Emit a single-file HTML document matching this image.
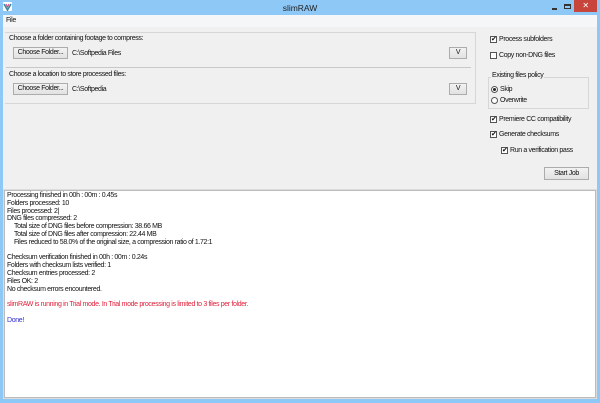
<!DOCTYPE html>
<html><head><meta charset="utf-8"><style>
*{margin:0;padding:0;box-sizing:border-box}
body{width:600px;height:403px;overflow:hidden;background:#8ec8f6;font-family:"Liberation Sans",sans-serif;font-size:7px;color:#111;position:relative;letter-spacing:-0.35px}
.a{position:absolute;white-space:nowrap}
#win{position:absolute;left:3px;top:15px;width:594px;height:384px;background:#f0f0f0}
.btn{position:absolute;border:1px solid #acacac;background:linear-gradient(#f2f2f2,#e2e2e2);text-align:center;font-size:7px;line-height:10px}
.cb{position:absolute;width:7px;height:7px;border:1px solid #555;background:#fff;font-size:7px;line-height:5px;text-align:center;letter-spacing:0}
.rb{position:absolute;width:7px;height:7px;border:1px solid #555;border-radius:50%;background:#fff}
.grp{position:absolute;border:1px solid #d6d6d6}
#log{position:absolute;left:4px;top:190px;width:592px;height:208px;background:#fff;border:1px solid #bbb;outline:1px solid #ddd;padding-top:1px}
#log div{height:7.8px;line-height:7.8px;white-space:nowrap;padding-left:2px}
</style></head><body>
<div class="a" style="left:3px;top:2px;width:9px;height:9px;background:#fff;border-radius:1px"><svg width="9" height="9"><path d="M1 2L4.5 8L8 2" stroke="#3a8a9a" stroke-width="1.6" fill="none"/><path d="M3 2L4.5 5L6 2" stroke="#d04080" stroke-width="1" fill="none"/></svg></div>
<div class="a" style="left:0;width:600px;top:3px;text-align:center;font-size:8.5px;color:#222;letter-spacing:0">slimRAW</div>
<div class="a" style="left:552px;top:8px;width:5px;height:2px;background:#333"></div>
<div class="a" style="left:564px;top:4px;width:7px;height:5px;border:1px solid #333;border-top-width:2px"></div>
<div class="a" style="left:574px;top:0;width:23px;height:12px;background:#c7453a;color:#fff;font-size:8px;text-align:center;line-height:12px">✕</div>
<div id="win"></div>
<div class="a" style="left:3px;top:15px;width:594px;height:12px;background:#f5f6f7"></div>
<div class="a" style="left:6px;top:17px">File</div>
<div class="grp" style="left:5px;top:32px;width:471px;height:72px;border-left:none;border-bottom:none"></div>
<div class="a" style="left:9px;top:35px">Choose a folder containing footage to compress:</div>
<div class="btn" style="left:13px;top:47px;width:55px;height:12px">Choose Folder...</div>
<div class="a" style="left:72px;top:50px">C:\Softpedia Files</div>
<div class="btn" style="left:449px;top:47px;width:18px;height:12px">V</div>
<div class="a" style="left:6px;top:67px;width:465px;height:1px;background:#c8c8c8"></div>
<div class="a" style="left:9px;top:71px">Choose a location to store processed files:</div>
<div class="grp" style="left:5px;top:68px;width:471px;height:36px;border-left:none;border-top:none"></div>
<div class="btn" style="left:13px;top:83px;width:55px;height:12px">Choose Folder...</div>
<div class="a" style="left:72px;top:86px">C:\Softpedia</div>
<div class="btn" style="left:449px;top:83px;width:18px;height:12px">V</div>
<div class="cb" style="left:490px;top:36px">✔</div><div class="a" style="left:499px;top:36px">Process subfolders</div>
<div class="cb" style="left:490px;top:52px"></div><div class="a" style="left:499px;top:52px">Copy non-DNG files</div>
<div class="grp" style="left:488px;top:77px;width:101px;height:32px"></div>
<div class="a" style="left:491px;top:72px;background:#f0f0f0;padding:0 1px">Existing files policy</div>
<div class="rb" style="left:491px;top:86px"><div style="position:absolute;left:1px;top:1px;width:3px;height:3px;border-radius:50%;background:#222"></div></div><div class="a" style="left:500px;top:86px">Skip</div>
<div class="rb" style="left:491px;top:97px"></div><div class="a" style="left:500px;top:97px">Overwrite</div>
<div class="cb" style="left:490px;top:116px">✔</div><div class="a" style="left:499px;top:116px">Premiere CC compatibility</div>
<div class="cb" style="left:490px;top:131px">✔</div><div class="a" style="left:499px;top:131px">Generate checksums</div>
<div class="cb" style="left:501px;top:147px">✔</div><div class="a" style="left:510px;top:147px">Run a verification pass</div>
<div class="btn" style="left:544px;top:167px;width:45px;height:13px;line-height:11px">Start Job</div>
<div id="log">
<div>Processing finished in 00h : 00m : 0.45s</div>
<div>Folders processed: 10</div>
<div>Files processed: 2|</div>
<div>DNG files compressed: 2</div>
<div style="padding-left:9px">Total size of DNG files before compression: 38.66 MB</div>
<div style="padding-left:9px">Total size of DNG files after compression: 22.44 MB</div>
<div style="padding-left:9px">Files reduced to 58.0% of the original size, a compression ratio of 1.72:1</div>
<div></div>
<div>Checksum verification finished in 00h : 00m : 0.24s</div>
<div>Folders with checksum lists verified: 1</div>
<div>Checksum entries processed: 2</div>
<div>Files OK: 2</div>
<div>No checksum errors encountered.</div>
<div></div>
<div style="color:#e0203a">slimRAW is running in Trial mode. In Trial mode processing is limited to 3 files per folder.</div>
<div></div>
<div style="color:#3030d0">Done!</div>
</div>
</body></html>
